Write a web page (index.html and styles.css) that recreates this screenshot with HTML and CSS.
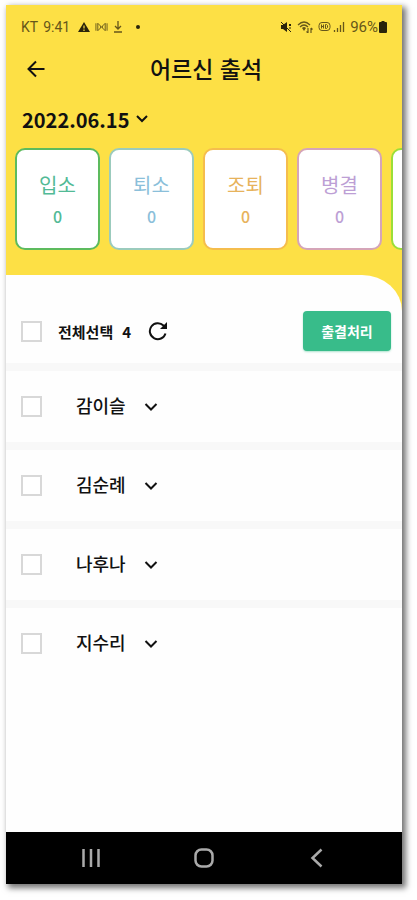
FILE: index.html
```html
<!DOCTYPE html>
<html lang="ko">
<head>
<meta charset="utf-8">
<meta name="viewport" content="width=device-width, initial-scale=1">
<title>어르신 출석</title>
<link rel="stylesheet" href="styles.css">
</head>
<body>
<div class="phone">
  <header class="top">
    <div class="status">
      <span>KT</span>
      <span>9:41</span>
      <svg class="warning" width="12" height="12" viewBox="0 0 12 12"><path d="M6 1 12 11H0Z" fill="currentColor"/><path d="M6 4.500V7.500M6 8.500V10" stroke="#fde045" stroke-width="1.200"/></svg>
      <svg width="13" height="12" viewBox="0 0 14 12" fill="none" stroke="currentColor"><path d="M1 2v8M13 2v8M3 2l3 3v2l-3 3V2ZM11 2 8 5v2l3 3V2ZM6 6h2"/></svg>
      <svg class="download" width="10" height="12" viewBox="0 0 10 12" fill="none" stroke="currentColor"><path d="M5 0v8M2 5l3 3 3-3M1 11h8" stroke-width="1.300"/></svg>
      <svg class="dot" width="4" height="4" viewBox="0 0 4 4"><circle cx="2" cy="2" r="2" fill="currentColor"/></svg>
      <span class="spacer"></span>
      <svg class="mute" width="12" height="12" viewBox="0 0 12 12"><path d="M1 4h2l4-3v10L3 8H1Z" fill="currentColor"/><path d="M1 1l10 10M9 3l2 2M9 5l2-2M9 7h2" stroke="currentColor" fill="none"/></svg>
      <svg class="wifi" width="16" height="12" viewBox="0 0 16 12" fill="none" stroke="currentColor" stroke-width="1.200"><path d="M1 4q6-6 12 0M3 6q4-4 8 0"/><path d="M5 7q2-2 4 0L7 10Z" fill="currentColor" stroke="none"/><path d="M11 7v5M9.500 10.500 11 12M14 12V7M14 7l1.500 1.500"/></svg>
      <svg width="13" height="12" viewBox="0 0 13 12" fill="none" stroke="currentColor"><rect x="1" y="1.500" width="11" height="8" rx="3"/><path d="M3.500 3.500v4M3.500 5.500h2M5.500 3.500v4M7.500 3.500v4h1l1-1v-2l-1-1Z"/></svg>
      <svg class="signal" width="12" height="12" viewBox="0 0 12 12" fill="none" stroke="currentColor" stroke-width="1.300"><path d="M1.500 9v2M4.500 7v4M7.500 4v7M10.500 1v10"/></svg>
      <span class="percent">96%</span>
      <svg class="battery" width="8" height="12" viewBox="0 0 8 12" fill="currentColor"><path d="M2.500 0h3v1H7q1 0 1 1v9q0 1-1 1H1q-1 0-1-1V2q0-1 1-1h1.500Z"/></svg>
    </div>
    <div class="title-bar">
      <button class="icon-button" type="button" aria-label="뒤로"><svg width="20" height="20" viewBox="0 0 20 20" fill="none" stroke="currentColor" stroke-width="2"><path d="M18.500 10H3M10 2.500 2.500 10l7.500 7.500"/></svg></button>
      <h1>어르신 출석</h1>
    </div>
    <button class="date" type="button">2022.06.15
      <svg width="12" height="8" viewBox="0 0 12 8" fill="none" stroke="currentColor" stroke-width="2"><path d="M1 1l5 5 5-5"/></svg>
    </button>
    <ul class="cards">
      <li class="card enter"><span>입소</span><b>0</b></li>
      <li class="card leave"><span>퇴소</span><b>0</b></li>
      <li class="card early"><span>조퇴</span><b>0</b></li>
      <li class="card sick"><span>병결</span><b>0</b></li>
      <li class="card more"></li>
    </ul>
  </header>
  <main>
    <div class="toolbar">
      <label class="select-all"><input type="checkbox"><span>전체선택</span><span>4</span></label>
      <button class="icon-button" type="button" aria-label="새로고침"><svg width="20" height="20" viewBox="0 0 20 20" fill="none" stroke="currentColor" stroke-width="2"><path d="M17.500 12.500A8 8 0 1 1 15.500 4.500L17 6"/><path d="M19 1v7h-7Z" fill="currentColor" stroke="none"/></svg></button>
      <button class="submit" type="button">출결처리</button>
    </div>
    <ul class="people">
      <li><label><input type="checkbox"><span>감이슬</span></label><button class="icon-button" type="button" aria-label="감이슬 펼치기"><svg width="14" height="10" viewBox="0 0 14 10" fill="none" stroke="currentColor" stroke-width="2"><path d="M1.500 2 7 7.500 12.500 2"/></svg></button></li>
      <li><label><input type="checkbox"><span>김순례</span></label><button class="icon-button" type="button" aria-label="김순례 펼치기"><svg width="14" height="10" viewBox="0 0 14 10" fill="none" stroke="currentColor" stroke-width="2"><path d="M1.500 2 7 7.500 12.500 2"/></svg></button></li>
      <li><label><input type="checkbox"><span>나후나</span></label><button class="icon-button" type="button" aria-label="나후나 펼치기"><svg width="14" height="10" viewBox="0 0 14 10" fill="none" stroke="currentColor" stroke-width="2"><path d="M1.500 2 7 7.500 12.500 2"/></svg></button></li>
      <li><label><input type="checkbox"><span>지수리</span></label><button class="icon-button" type="button" aria-label="지수리 펼치기"><svg width="14" height="10" viewBox="0 0 14 10" fill="none" stroke="currentColor" stroke-width="2"><path d="M1.500 2 7 7.500 12.500 2"/></svg></button></li>
    </ul>
  </main>
  <nav class="system-nav">
    <button class="icon-button" type="button" aria-label="최근 앱"><svg width="20" height="20" viewBox="0 0 20 20" fill="none" stroke="currentColor" stroke-width="2.500"><path d="M2.500 1v18M10 1v18M17.500 1v18"/></svg></button>
    <button class="icon-button" type="button" aria-label="홈"><svg width="20" height="20" viewBox="0 0 20 20" fill="none" stroke="currentColor" stroke-width="2.500"><rect x="1.500" y="1.500" width="17" height="17" rx="6"/></svg></button>
    <button class="icon-button" type="button" aria-label="이전"><svg width="20" height="20" viewBox="0 0 20 20" fill="none" stroke="currentColor" stroke-width="2.500"><path d="M14.500 1.500 5.500 10l9 8.500"/></svg></button>
  </nav>
</div>
</body>
</html>
```

FILE: styles.css
```css
* { box-sizing: border-box; }

body {
  margin: 0;
  min-height: 100vh;
  padding: 5px 15px 16px 6px;
  display: flex;
  background: #fff;
  color: #111;
  font-family: "Noto Sans CJK KR", sans-serif;
}

button {
  border: 0;
  padding: 0;
  background: none;
  color: inherit;
  font: inherit;
}

svg { display: block; flex: none; }
ul { list-style: none; margin: 0; padding: 0; }

.phone {
  flex: 1;
  min-width: 0;
  display: flex;
  flex-direction: column;
  overflow: hidden;
  background: #fefefe;
  box-shadow: 3px 3px 6px 1px #0000008c;
}

.top {
  background: #fde045;
  padding-top: 12px;
}

.status {
  display: flex;
  align-items: center;
  gap: 5px;
  height: 20px;
  padding: 0 15px;
  color: #66561a;
  font-family: Roboto, sans-serif;
  font-size: 14px;
}

.status .warning { color: #2a240b; margin-left: 3px; }
.status .dot { margin-left: 8px; color: #2a240b; }
.status .mute { color: #2a240b; }
.status .signal { margin-left: -3px; }
.status .percent { font-size: 15px; }
.status .battery { color: #2a240b; margin-left: -4px; }
.spacer { flex: 1; }

.title-bar {
  display: grid;
  grid-template-columns: 20px 1fr 20px;
  align-items: center;
  height: 40px;
  margin-top: 12px;
  padding: 0 16px 0 20px;
}

h1 {
  margin: 0;
  padding-bottom: 3px;
  text-align: center;
  font-size: 23px;
  line-height: 32px;
  font-weight: 500;
}

.icon-button { display: flex; }

.date {
  display: flex;
  align-items: center;
  gap: 7px;
  height: 32px;
  margin: 14px 0 13px 16px;
  font-size: 20px;
  font-weight: 700;
}

.cards {
  display: flex;
  gap: 9px;
  padding: 0 0 25px 9px;
  overflow: hidden;
}

.card {
  flex: none;
  width: 85px;
  height: 102px;
  display: flex;
  flex-direction: column;
  align-items: center;
  justify-content: center;
  gap: 3px;
  padding-top: 3px;
  border: 2px solid;
  border-radius: 10px;
  background: #fff;
  font-size: 20px;
  line-height: 28px;
}

.card b { font-size: 16px; font-weight: 500; }
.enter { border-color: #5dbb5e; color: #52ba96; }
.leave { border-color: #9bcbbd; color: #8bbfda; }
.early { border-color: #f5bd4d; color: #e7b35c; }
.sick { border-color: #d5a5b8; color: #bd9fd5; }
.more { border-color: #9bdf37; }

main {
  flex: 1;
  background: linear-gradient(#fde045 0 60px, #fefefe 60px);
}

.toolbar {
  display: flex;
  align-items: center;
  height: 88px;
  padding: 24px 11px 0 15px;
  border-top-right-radius: 40px 36px;
  background: #fefefe;
}

label { display: flex; align-items: center; }

input {
  appearance: none;
  width: 21px;
  height: 21px;
  margin: 0;
  border: 2px solid #d8d8d8;
  background: #fff;
}

.select-all { margin-right: 17px; font-size: 15px; font-weight: 700; }
.select-all span { margin-left: 9px; }
.select-all input + span { margin-left: 16px; }

.submit {
  width: 88px;
  height: 40px;
  margin-left: auto;
  border-radius: 4px;
  background: #38bc8a;
  box-shadow: 0 1px 2px #38bc8a66;
  color: #fff;
  font-size: 14px;
  font-weight: 700;
}

.people { background: #fefefe; }

.people li {
  display: flex;
  align-items: center;
  height: 79px;
  padding-left: 15px;
  border-top: 8px solid #f8f8f8;
}

.people span {
  margin: 0 18px 0 34px;
  padding-bottom: 3px;
  font-size: 18px;
  font-weight: 500;
}

.system-nav {
  display: flex;
  align-items: center;
  justify-content: space-between;
  height: 52px;
  padding: 0 19%;
  background: #000;
  color: #aaa;
}
```
